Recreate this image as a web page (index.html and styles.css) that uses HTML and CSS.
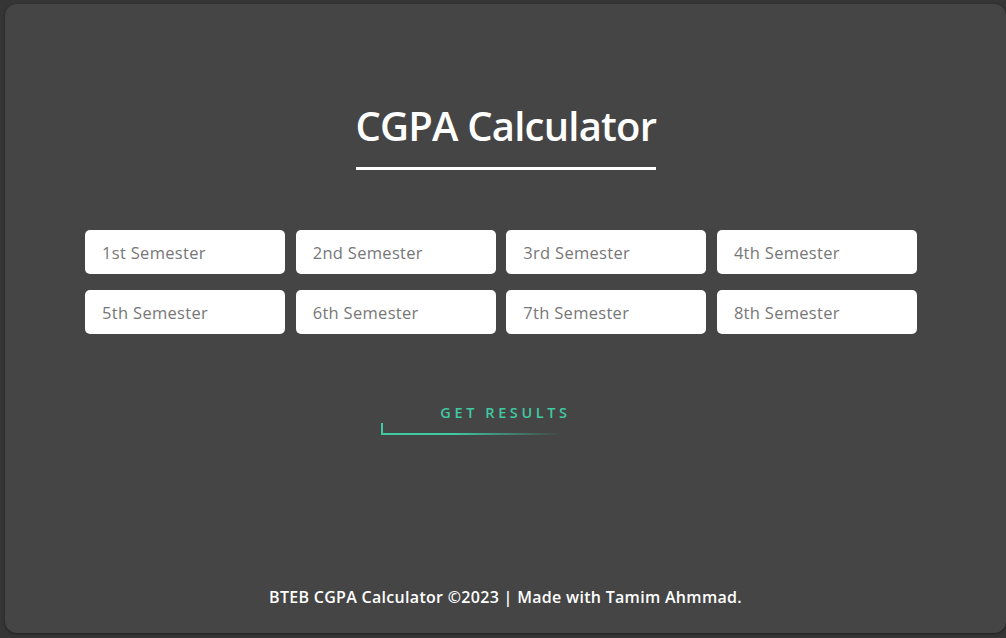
FILE: index.html
```html
<!DOCTYPE html>
<html>
<head>
<meta charset="utf-8">
<link rel="stylesheet" href="styles.css">
</head>
<body>
<div class="card">
  <h1 class="title">CGPA Calculator</h1>
  <div class="grid">
    <input class="field" placeholder="1st Semester">
    <input class="field" placeholder="2nd Semester">
    <input class="field" placeholder="3rd Semester">
    <input class="field" placeholder="4th Semester">
    <input class="field" placeholder="5th Semester">
    <input class="field" placeholder="6th Semester">
    <input class="field" placeholder="7th Semester">
    <input class="field" placeholder="8th Semester">
  </div>
  <div class="btn-wrap">
    <button class="btn">GET RESULTS</button>
  </div>
  <p class="footer">BTEB CGPA Calculator ©2023 | Made with Tamim Ahmmad.</p>
</div>
</body>
</html>
```
FILE: styles.css
```css
html, body {
  margin: 0;
  height: 100%;
}
body {
  background: #353535;
  padding: 4px 0 5px 5px;
  box-sizing: border-box;
  overflow: hidden;
}
.card {
  height: 629px;
  background: #454545;
  border-radius: 12px;
  box-shadow: 0 1px 3px rgba(0,0,0,0.4);
  display: flex;
  flex-direction: column;
  align-items: center;
  font-family: "Open Sans", sans-serif;
}
.title {
  margin: 98px 0 0;
  color: #fff;
  font-family: "Open Sans", sans-serif;
  font-weight: 600;
  font-size: 40px;
  line-height: 48px;
  padding-bottom: 17px;
  border-bottom: 3px solid #fff;
  width: 300px;
  text-align: center;
  letter-spacing: -0.8px;
  white-space: nowrap;
}
.grid {
  margin-top: 60px;
  margin-right: 9px;
  display: grid;
  grid-template-columns: repeat(4, 200px);
  column-gap: 10.6px;
  row-gap: 16px;
}
.field {
  height: 44px;
  box-sizing: border-box;
  border: none;
  border-radius: 5px;
  background: #fff;
  padding: 0 17px;
  font-family: "Open Sans", sans-serif;
  font-size: 16.5px;
  letter-spacing: 0.3px;
  outline: none;
}
.field::placeholder {
  color: #777;
}
.btn-wrap {
  margin-top: 67px;
  width: 250px;
  display: flex;
  justify-content: flex-start;
}
.btn {
  position: relative;
  width: 250px;
  height: 34px;
  padding: 0 0 12px;
  background: transparent;
  border: none;
  color: #3fc9a2;
  font-family: "Open Sans", sans-serif;
  font-size: 14.5px;
  font-weight: 600;
  letter-spacing: 3.6px;
  text-align: center;
  cursor: pointer;
}
.btn::before {
  content: "";
  position: absolute;
  left: 0;
  bottom: 0;
  width: 2px;
  height: 12px;
  background: #3fc9a2;
}
.btn::after {
  content: "";
  position: absolute;
  left: 0;
  bottom: 0;
  width: 180px;
  height: 2px;
  background: linear-gradient(to right, #3fc9a2 0%, #3fc9a2 40%, rgba(63,201,162,0) 100%);
}
.footer {
  margin: auto 0 25px;
  color: #fff;
  font-family: "Open Sans", sans-serif;
  font-weight: 600;
  font-size: 16px;
  letter-spacing: 0.3px;
}
```
